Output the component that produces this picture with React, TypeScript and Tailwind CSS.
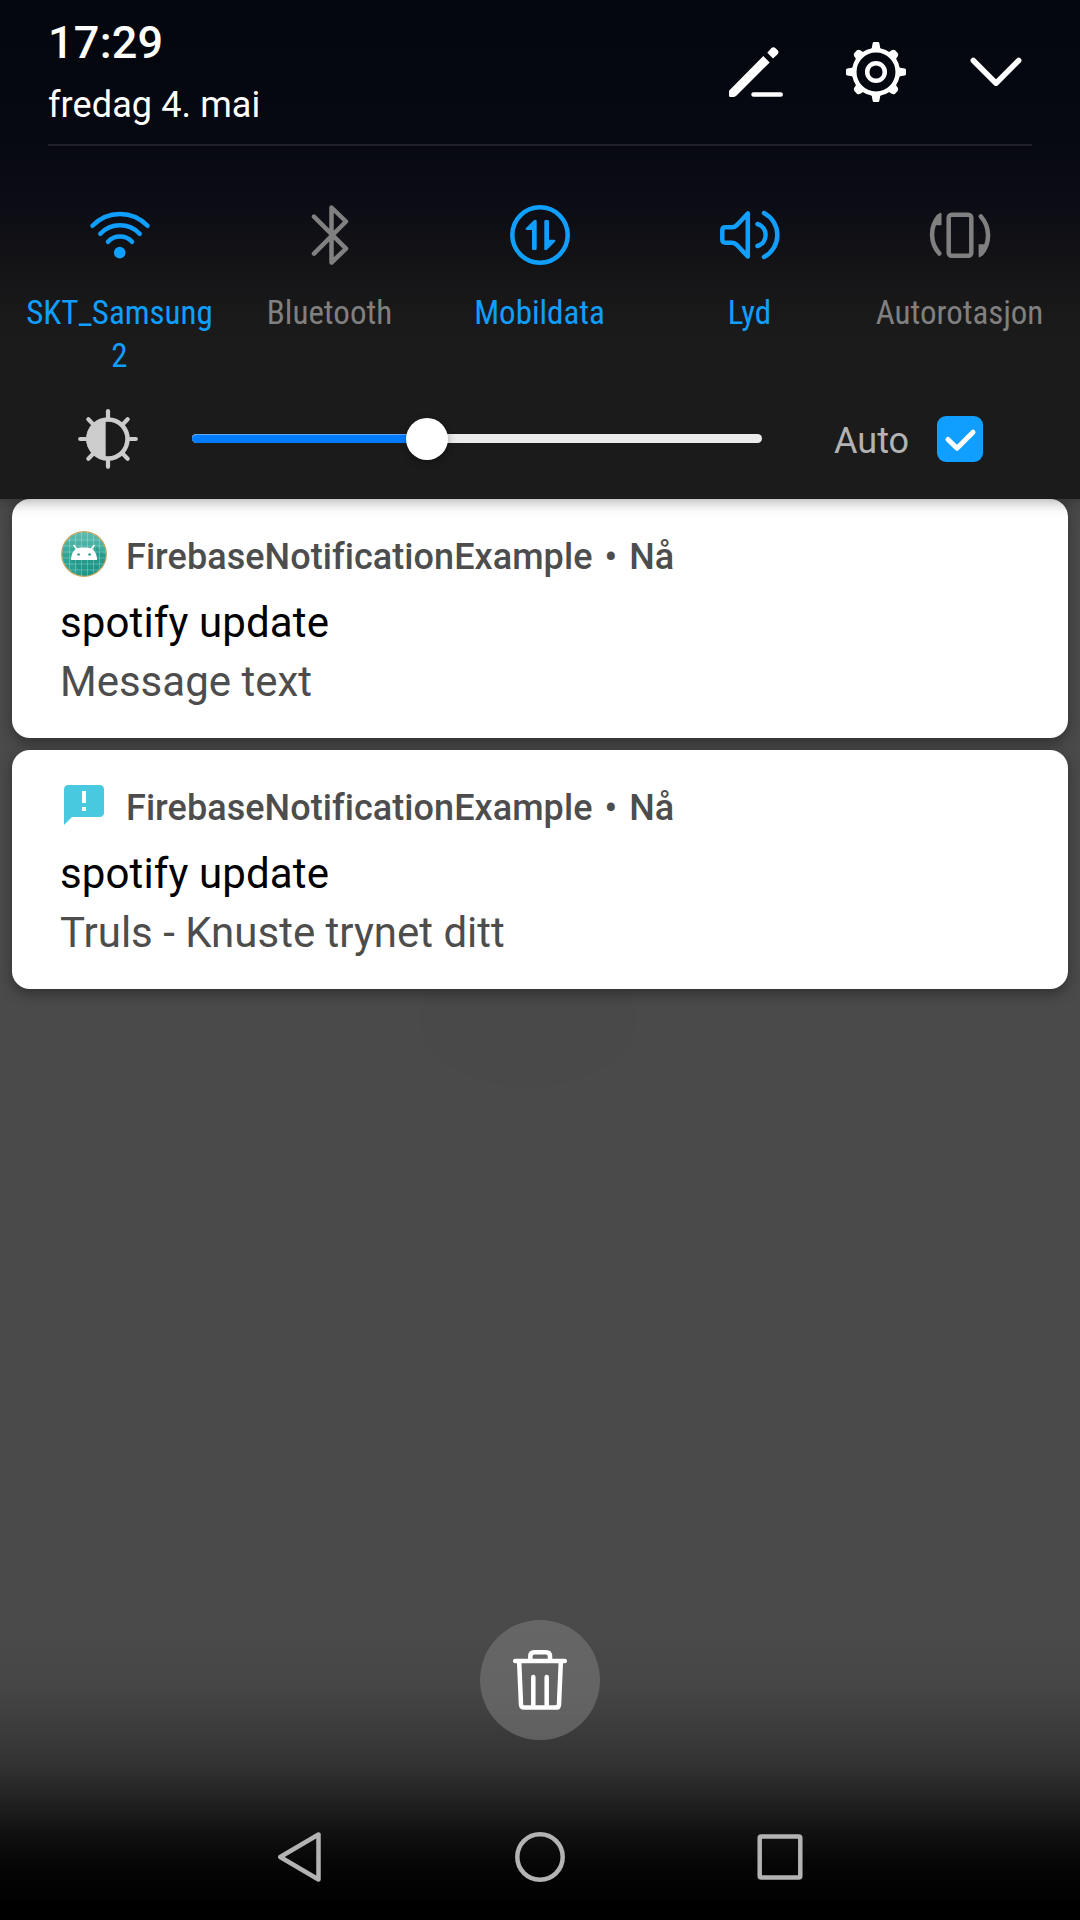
import type { ReactNode } from "react";

function Icon({ children, className = "" }: { children: ReactNode; className?: string }) {
  return (
    <svg
      viewBox="0 0 60 60"
      className={`h-[60px] w-[60px] shrink-0 overflow-visible ${className}`}
      fill="none"
      stroke="currentColor"
      strokeWidth="4.5"
      strokeLinecap="round"
      strokeLinejoin="round"
    >
      {children}
    </svg>
  );
}

const teeth = [0, 45, 90, 135, 180, 225, 270, 315];

function EditIcon() {
  return (
    <Icon>
      <g fill="currentColor" stroke="none">
        <path d="M4 48.8 38.3 14l6.4 6.4-33.4 33.4q-1 1.1-2.5 1.1H5.5q-1.5 0-1.5-1.5z" />
        <path d="M42.3 10.7 46.2 6.3q2.2-2.2 4.4 0l1.8 1.8q2.2 2.2 0 4.4L48 16.4z" />
      </g>
      <path d="M28.5 52.4H55.7" />
    </Icon>
  );
}

function GearIcon() {
  return (
    <Icon>
      <circle cx="30" cy="30" r="21.7" />
      <circle cx="30" cy="30" r="8.8" />
      {teeth.map((a) => (
        <path
          key={a}
          transform={`rotate(${a} 30 30)`}
          fill="currentColor"
          stroke="none"
          d={
            a % 90 === 0
              ? "M24 8.5 25.8 6 26.6 1.2Q26.8 0 28 0H32Q33.2 0 33.4 1.2L34.2 6 36 8.5z"
              : "M24.8 8.5 25.6 4Q26 1.4 28.2 1.2H31.8Q34 1.4 34.4 4L35.2 8.5z"
          }
        />
      ))}
    </Icon>
  );
}

function ChevronIcon() {
  return (
    <Icon>
      <path d="M7.3 18.5 30 41.2 52.7 18.5" strokeWidth="5.5" />
    </Icon>
  );
}

function WifiIcon() {
  return (
    <Icon>
      <path d="M2.5 20.8A38 38 0 0 1 57.5 20.8M10.3 28.8A27 27 0 0 1 49.7 28.8M18 36.8A16.5 16.5 0 0 1 42 36.8" />
      <circle cx="29.7" cy="47.6" r="5.8" fill="currentColor" stroke="none" />
    </Icon>
  );
}

function BluetoothIcon() {
  return (
    <Icon>
      <path d="M14 11.6 46 43.7 31.5 57.5V2.5L46 16.5 14 48.6" />
    </Icon>
  );
}

function DataIcon() {
  return (
    <Icon>
      <circle cx="30" cy="30" r="27.7" />
      <g fill="currentColor" stroke="none">
        <path d="M26.7 16V43.7a1.3 1.3 0 0 1-1.3 1.3H23.3a1.3 1.3 0 0 1-1.3-1.3V25H16.8q-2-.2-.8-2L23.8 15.3q2.5-1.6 2.9.7z" />
        <path d="M34.3 44V16.3a1.3 1.3 0 0 1 1.3-1.3H37.7a1.3 1.3 0 0 1 1.3 1.3V34.7H44.2q2 .2.8 2L37.2 44.6q-2.5 1.6-2.9-.6z" />
      </g>
    </Icon>
  );
}

function SoundIcon() {
  return (
    <Icon>
      <path d="M27.8 8.5V51.5L17 40Q14.5 37.7 12.5 37.7H5.5Q2.3 37.7 2.3 34.5V25.5Q2.3 22.3 5.5 22.3H12.5Q14.5 22.3 17 20z" />
      <path d="M37.5 19A11.5 11.5 0 0 1 37.5 41M44 8A24.8 24.8 0 0 1 44 52" />
    </Icon>
  );
}

function RotateIcon() {
  return (
    <Icon>
      <rect x="18.7" y="9.7" width="22.6" height="41" rx="3" />
      <path d="M9.3 48.5A28.5 28.5 0 0 1 8.5 11.5M50.9 11.5A28.5 28.5 0 0 1 51.5 48.5" />
      <g fill="currentColor" stroke="none">
        <path d="M9.2 8.3Q11.3 7 11.5 9V20.3H4.5z" />
        <path d="M50.9 51.7Q48.7 53 48.6 51V39.3H55.5z" />
      </g>
    </Icon>
  );
}

function BrightnessIcon() {
  return (
    <Icon className="text-[#cccccc]">
      <circle cx="30" cy="30" r="19.5" />
      <path d="M27.7 10.5V49.5A19.5 19.5 0 0 1 27.7 10.5z" fill="currentColor" stroke="none" />
      {teeth.map((a) => (
        <path
          key={a}
          transform={`rotate(${a} 30 30)`}
          strokeWidth="4.2"
          d="M30 2.2V9"
        />
      ))}
    </Icon>
  );
}

function TrashIcon() {
  return (
    <Icon>
      <path d="M5.2 11.1H54.8M20.3 9.5V6.5Q20.3 2.3 24.3 2.3H36Q40 2.3 40 6.5V9.5M9.2 12.5 11 54.5Q11.2 57.6 14 57.6H46Q48.8 57.6 49 54.5L50.8 12.5M23.3 27V56M36.7 27V56" />
    </Icon>
  );
}

function AndroidAppIcon() {
  return (
    <svg viewBox="0 0 46 46" className="h-[46px] w-[46px]">
      <defs>
        <linearGradient id="appGreen" x1="0" y1="0" x2="0" y2="1">
          <stop offset="0" stopColor="#62bdb2" />
          <stop offset="0.5" stopColor="#2fa898" />
          <stop offset="1" stopColor="#219c8c" />
        </linearGradient>
        <clipPath id="appDisc">
          <circle cx="23" cy="23" r="22" />
        </clipPath>
      </defs>
      <circle cx="23" cy="23" r="22.3" fill="url(#appGreen)" stroke="#c9a45c" strokeWidth="1.2" />
      <g clipPath="url(#appDisc)">
        <path d="M35 15 46 26V46H25L10 29H36z" fill="#15877a" opacity="0.35" />
        <path
          d="M8.5 0V46M14.5 0V46M20.5 0V46M26.5 0V46M32.5 0V46M38.5 0V46M0 9H46M0 15H46M0 21H46M0 27H46M0 33H46M0 39H46"
          stroke="#ffffff"
          strokeOpacity="0.28"
          strokeWidth="0.9"
        />
      </g>
      <path d="M13 14.5 16.5 19M33 14.5 29.5 19" stroke="#fff" strokeWidth="1.6" strokeLinecap="round" />
      <path d="M10 29C10 21.5 14 16.5 20 16.5H26C32 16.5 36 21.5 36 29z" fill="#fff" />
      <circle cx="17.6" cy="23.5" r="1.3" fill="#2a9f90" />
      <circle cx="28.6" cy="23.5" r="1.3" fill="#2a9f90" />
    </svg>
  );
}

function FeedbackAppIcon() {
  return (
    <svg viewBox="0 0 24 24" className="h-12 w-12 shrink-0" fill="#48c9e0">
      <path d="M20 2H4c-1.1 0-1.99.9-1.99 2L2 22l4-4h14c1.1 0 2-.9 2-2V4c0-1.1-.9-2-2-2zm-7 9h-2V5h2v6zm0 4h-2v-2h2v2z" />
    </svg>
  );
}

const tiles = [
  { label: "SKT_Samsung 2", on: true, icon: <WifiIcon /> },
  { label: "Bluetooth", on: false, icon: <BluetoothIcon /> },
  { label: "Mobildata", on: true, icon: <DataIcon /> },
  { label: "Lyd", on: true, icon: <SoundIcon /> },
  { label: "Autorotasjon", on: false, icon: <RotateIcon /> },
];

const notifications = [
  { icon: <AndroidAppIcon />, title: "spotify update", text: "Message text" },
  { icon: <FeedbackAppIcon />, title: "spotify update", text: "Truls - Knuste trynet ditt" },
];

export default function App() {
  return (
    <div className="flex h-[1920px] w-[1080px] flex-col overflow-hidden bg-[radial-gradient(ellipse_110px_70px_at_528px_1018px,rgba(0,0,0,0.02)_98%,transparent_100%),linear-gradient(to_bottom,#4a4a4a_1630px,#454545_1690px,#343434_1760px,#222222_1800px,#121212_1830px,#070707_1860px,#000000_1905px)] font-['Roboto',sans-serif]">
      <section className="relative z-10 h-[499px] shrink-0 bg-[linear-gradient(to_bottom,#04060e_0px,#070912_140px,#0b0c15_200px,#131316_260px,#19191a_310px,#1b1b1b_350px)] shadow-[0_2px_14px_rgba(0,0,0,0.35)]">
        <header className="mx-12 flex h-[146px] justify-between border-b-2 border-[#20212a] text-white">
          <div className="pt-4">
            <div className="text-[45px] leading-[54px] font-medium tracking-[0.25px]">17:29</div>
            <div className="mt-[14px] text-[36px] leading-[42px] tracking-[0.1px]">fredag 4. mai</div>
          </div>
          <div className="mr-[6px] flex pt-[42px]">
            <div className="mr-[61px]">
              <EditIcon />
            </div>
            <div className="mr-[60px]">
              <GearIcon />
            </div>
            <ChevronIcon />
          </div>
        </header>
        <div className="mx-[15px] mt-[59px] grid grid-cols-5">
          {tiles.map((t) => (
            <div
              key={t.label}
              className={`flex flex-col items-center ${t.on ? "text-[#109fff]" : "text-[#808080]"}`}
            >
              {t.icon}
              <div className="mt-[26px] mr-px w-[190px] text-center font-['Roboto_Condensed','Roboto',sans-serif] text-[33px] leading-[43px] [font-stretch:75%]">
                {t.label}
              </div>
            </div>
          ))}
        </div>
        <div className="absolute inset-x-0 top-[409px] flex h-[60px] items-center pl-[78px]">
          <BrightnessIcon />
          <div className="relative mb-px ml-[54px] h-[9px] w-[570px] rounded-full bg-[#ebebeb]">
            <div className="h-full w-[235px] rounded-full border-t border-[#5aa8f5] bg-[#007dff]" />
            <div className="absolute top-[-16px] left-[214px] h-[42px] w-[42px] rounded-full bg-white shadow-[0_3px_8px_rgba(0,0,0,0.3)]" />
          </div>
          <div className="mt-1 ml-[72px] w-[103px] text-[36px] leading-[42px] text-[#b3b3b3]">Auto</div>
          <div className="flex h-[46px] w-[46px] items-center justify-center rounded-[9px] bg-[#109fff]">
            <svg viewBox="0 0 46 46" className="h-[46px] w-[46px]" fill="none" stroke="#fff" strokeWidth="5" strokeLinecap="round" strokeLinejoin="round">
              <path d="M11 23.5 20 32.2 36 16.2" />
            </svg>
          </div>
        </div>
      </section>

      <main className="flex flex-col gap-3 px-3">
        {notifications.map((n) => (
          <article
            key={n.text}
            className="h-[239px] rounded-[18px] bg-white pl-12 shadow-[0_5px_14px_rgba(0,0,0,0.35)]"
          >
            <div className="flex h-[90px] items-end">
              <div className="flex h-[70px] w-[66px] items-center">
                <div className="flex w-12 items-center justify-center">{n.icon}</div>
              </div>
              <div className="flex h-16 items-center text-[36px] font-medium tracking-[0.06px] text-[#4d4d4d]">
                FirebaseNotificationExample
                <span className="mx-3">•</span>
                Nå
              </div>
            </div>
            <div className="mt-[9px] text-[42px] leading-[50px] tracking-[0.12px] text-black">{n.title}</div>
            <div className="mt-[9px] text-[42px] leading-[50px] text-[#4d4d4d]">{n.text}</div>
          </article>
        ))}
      </main>

      <div className="mt-auto flex justify-center">
        <button className="flex h-[120px] w-[120px] items-center justify-center rounded-full bg-[#777777]/62 text-white">
          <TrashIcon />
        </button>
      </div>
      <nav className="mt-[54px] flex h-[126px] items-center justify-center gap-[180px] text-[#b3b3b3]">
        <Icon>
          <path d="M10.2 30 48.5 7.5V52.5z" />
        </Icon>
        <Icon>
          <circle cx="30" cy="30" r="22.7" />
        </Icon>
        <Icon>
          <rect x="9.7" y="9.5" width="40.6" height="41" rx="1.5" />
        </Icon>
      </nav>
    </div>
  );
}
